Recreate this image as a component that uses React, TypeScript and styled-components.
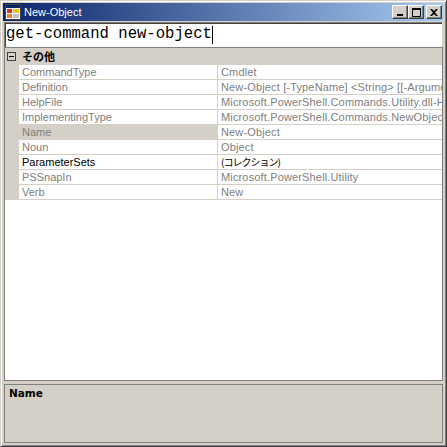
import React from 'react';
import styled, { createGlobalStyle } from 'styled-components';

const GlobalStyle = createGlobalStyle`
  html, body {
    margin: 0;
    padding: 0;
    background: #d4d0c8;
  }
  body {
    font-family: "Liberation Sans", Arial, sans-serif;
  }
`;

const Window = styled.div`
  box-sizing: border-box;
  width: 447px;
  height: 447px;
  display: flex;
  flex-direction: column;
  background: #d4d0c8;
  border: 1px solid;
  border-color: #d4d0c8 #404040 #404040 #d4d0c8;
  box-shadow: inset 1px 1px #fff, inset -1px -1px #808080;
  padding: 2px 3px 3px 2px;
`;

const TitleBar = styled.div`
  height: 18px;
  flex: none;
  display: flex;
  align-items: center;
  gap: 3px;
  padding: 0 1px 0 2px;
  background: linear-gradient(to right, #0a246a, #a6caf0);
`;

const TitleText = styled.span`
  color: #fff;
  font-size: 11px;
  line-height: 18px;
`;

const Buttons = styled.div`
  margin-left: auto;
  display: flex;
`;

const CaptionButton = styled.button<{ $gap?: boolean }>`
  box-sizing: border-box;
  width: 16px;
  height: 14px;
  padding: 0;
  margin-left: ${(p) => (p.$gap ? '2px' : '0')};
  display: flex;
  align-items: center;
  justify-content: center;
  background: #d4d0c8;
  border: 1px solid;
  border-color: #fff #404040 #404040 #fff;
  box-shadow: inset -1px -1px #808080;
`;

const CommandBox = styled.div`
  height: 25px;
  flex: none;
  margin: 1px 1px 0 1px;
  padding-left: 2px;
  background: #fff;
  box-shadow: inset 1px 1px #808080, inset 2px 2px #404040;
  font-family: "Liberation Mono", "Courier New", monospace;
  font-size: 15.6px;
  line-height: 25px;
  color: #000;
  white-space: nowrap;
  display: flex;
  align-items: center;
`;

const Caret = styled.span`
  display: inline-block;
  width: 1px;
  height: 18px;
  background: #000;
`;

const Grid = styled.div`
  flex: 1;
  margin: 0 0 0 1px;
  border: 1px solid #808080;
  background: #fff;
  overflow: hidden;
`;

const CategoryRow = styled.div`
  height: 17px;
  display: flex;
  align-items: center;
  background: #d4d0c8;
`;

const MinusBox = styled.span`
  box-sizing: border-box;
  width: 9px;
  height: 9px;
  margin-left: 2px;
  border: 1px solid #404040;
  display: flex;
  align-items: center;
  justify-content: center;
  &::after {
    content: '';
    width: 5px;
    height: 1px;
    background: #000;
  }
`;

const CategoryName = styled.span`
  margin-left: 6px;
  font-family: "Noto Sans CJK JP", sans-serif;
  font-weight: 700;
  font-size: 11px;
  line-height: 17px;
  color: #000;
`;

const Row = styled.div`
  height: 15px;
  display: flex;
`;

const Gutter = styled.div`
  width: 14px;
  flex: none;
  background: #d4d0c8;
`;

const LabelCell = styled.div<{ $selected?: boolean; $strong?: boolean }>`
  box-sizing: border-box;
  width: 199px;
  flex: none;
  padding-left: 3px;
  border-bottom: 1px solid #d4d0c8;
  border-right: 1px solid #d4d0c8;
  background: ${(p) => (p.$selected ? '#d4d0c8' : '#fff')};
  color: ${(p) => (p.$strong ? '#000' : '#808080')};
  font-size: 11px;
  line-height: 14px;
  white-space: nowrap;
  overflow: hidden;
`;

const ValueCell = styled.div<{ $strong?: boolean }>`
  box-sizing: border-box;
  flex: 1;
  min-width: 0;
  padding-left: 3px;
  border-bottom: 1px solid #d4d0c8;
  color: ${(p) => (p.$strong ? '#000' : '#808080')};
  font-size: 11px;
  line-height: 14px;
  letter-spacing: 0.15px;
  white-space: nowrap;
  overflow: hidden;
`;

const Collection = styled.span`
  font-family: "Noto Sans CJK JP", sans-serif;
  font-size: 10px;
  letter-spacing: -1px;
`;

const Description = styled.div`
  height: 59px;
  flex: none;
  box-sizing: border-box;
  margin: 3px 0 0 1px;
  border: 1px solid #808080;
  padding: 1px 4px;
  background: #d4d0c8;
`;

const DescTitle = styled.div`
  font-family: "DejaVu Sans", sans-serif;
  font-weight: 700;
  font-size: 10.5px;
  line-height: 14px;
  color: #000;
`;

const AppIcon = () => (
  <svg width="16" height="16" viewBox="0 0 16 16">
    <rect x="0.5" y="0.5" width="15" height="15" fill="#fff" stroke="#404040" />
    <rect x="1" y="1" width="14" height="3" fill="#0a246a" />
    <rect x="2" y="5" width="5" height="4" fill="#e03020" />
    <rect x="8" y="5" width="6" height="4" fill="#f0c020" />
    <rect x="2" y="10" width="5" height="4" fill="#f08030" />
    <rect x="8" y="10" width="6" height="4" fill="#c0c0c0" />
  </svg>
);

const MinIcon = () => (
  <svg width="8" height="7" viewBox="0 0 8 7">
    <rect x="1" y="5" width="6" height="2" fill="#000" />
  </svg>
);

const MaxIcon = () => (
  <svg width="9" height="9" viewBox="0 0 9 9">
    <rect x="0.5" y="0.5" width="8" height="8" fill="none" stroke="#000" />
    <rect x="0" y="1" width="9" height="1" fill="#000" />
  </svg>
);

const CloseIcon = () => (
  <svg width="8" height="7" viewBox="0 0 8 7">
    <path d="M0 0h2l2 2 2-2h2L5 3.5 8 7H6L4 5 2 7H0l3-3.5z" fill="#000" />
  </svg>
);

type Prop = { name: string; value: React.ReactNode; selected?: boolean; strong?: boolean };

const props: Prop[] = [
  { name: 'CommandType', value: 'Cmdlet' },
  { name: 'Definition', value: 'New-Object [-TypeName] <String> [[-ArgumentList] <Object[]>] [-Property <Hashtable>]' },
  { name: 'HelpFile', value: 'Microsoft.PowerShell.Commands.Utility.dll-Help.xml' },
  { name: 'ImplementingType', value: 'Microsoft.PowerShell.Commands.NewObjectCommand' },
  { name: 'Name', value: 'New-Object', selected: true },
  { name: 'Noun', value: 'Object' },
  { name: 'ParameterSets', value: <Collection>(コレクション)</Collection>, strong: true },
  { name: 'PSSnapIn', value: 'Microsoft.PowerShell.Utility' },
  { name: 'Verb', value: 'New' },
];

export default function App() {
  return (
    <>
      <GlobalStyle />
      <Window>
        <TitleBar>
          <AppIcon />
          <TitleText>New-Object</TitleText>
          <Buttons>
            <CaptionButton><MinIcon /></CaptionButton>
            <CaptionButton><MaxIcon /></CaptionButton>
            <CaptionButton $gap><CloseIcon /></CaptionButton>
          </Buttons>
        </TitleBar>
        <CommandBox>
          get-command new-object<Caret />
        </CommandBox>
        <Grid>
          <CategoryRow>
            <MinusBox />
            <CategoryName>その他</CategoryName>
          </CategoryRow>
          {props.map((p) => (
            <Row key={p.name}>
              <Gutter />
              <LabelCell $selected={p.selected} $strong={p.strong}>{p.name}</LabelCell>
              <ValueCell $strong={p.strong}>{p.value}</ValueCell>
            </Row>
          ))}
        </Grid>
        <Description>
          <DescTitle>Name</DescTitle>
        </Description>
      </Window>
    </>
  );
}
